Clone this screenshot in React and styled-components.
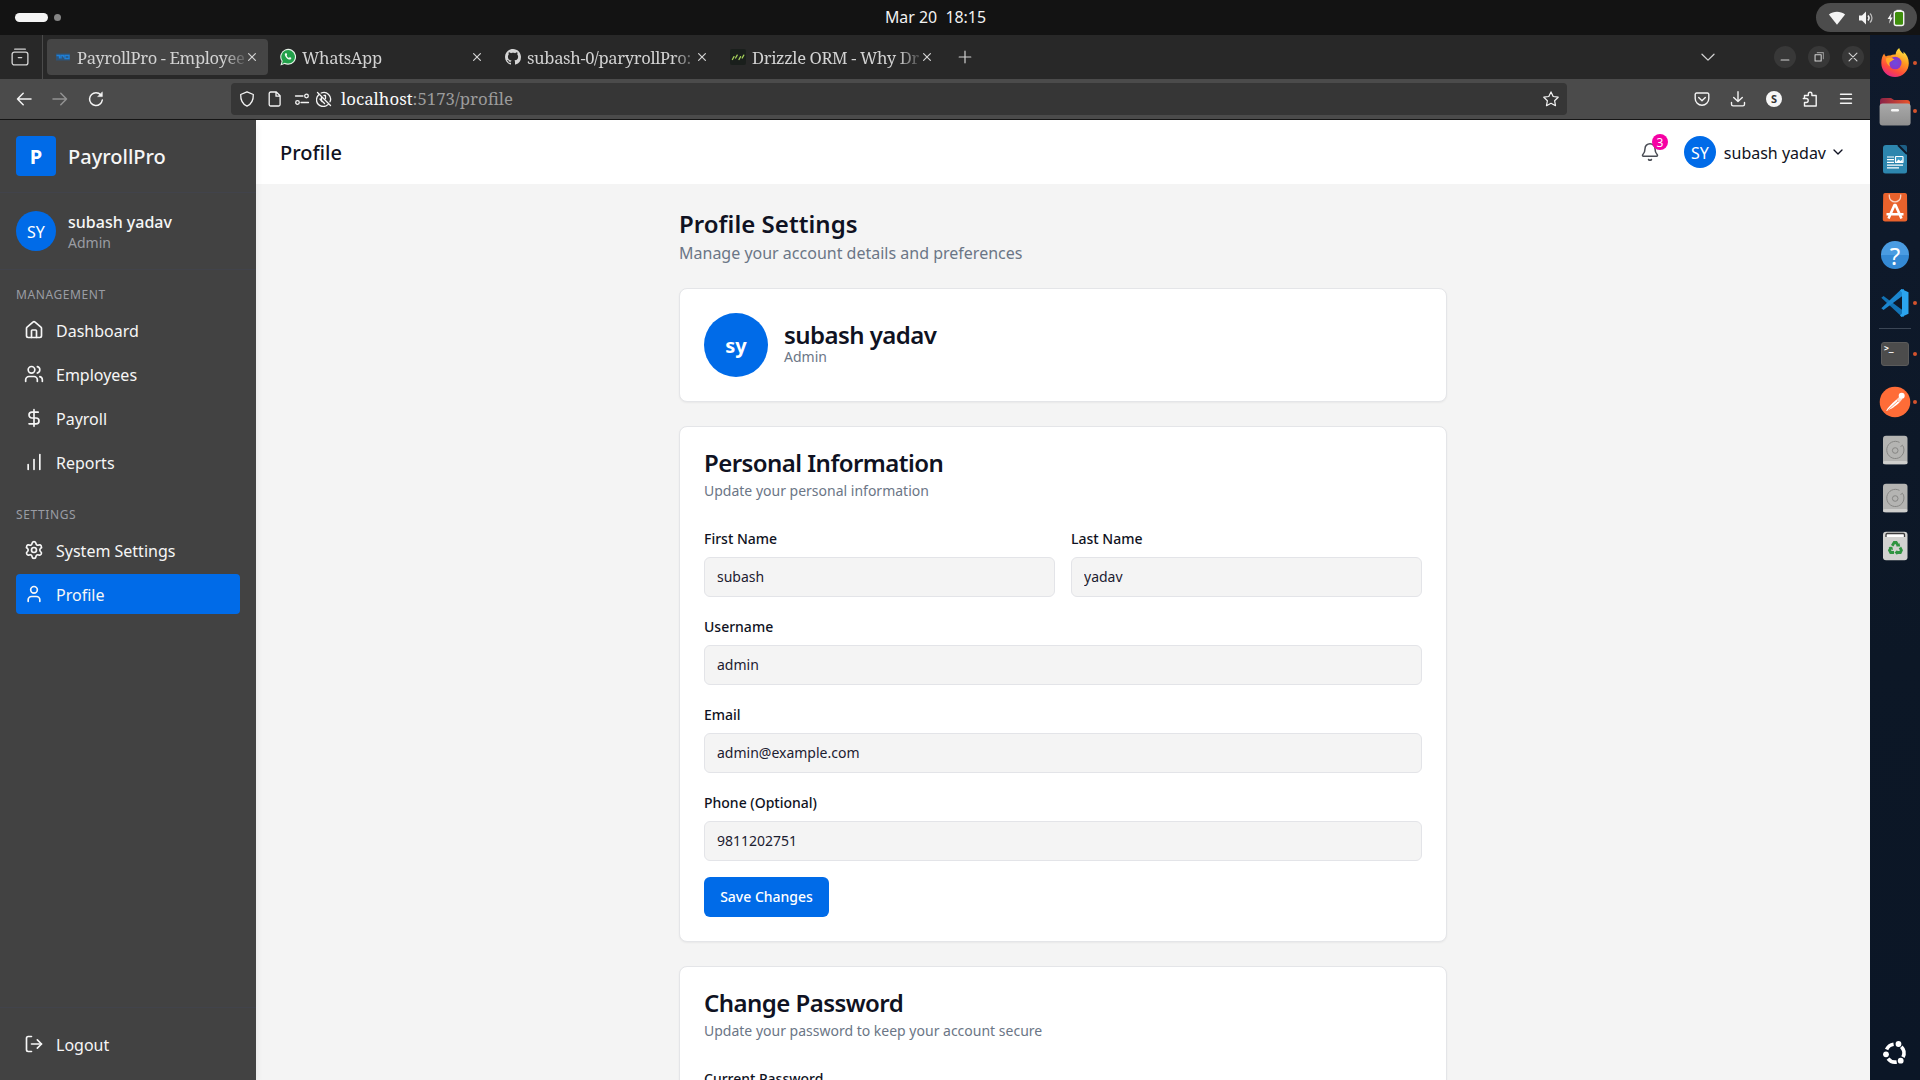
import React from "react";
import styled, { createGlobalStyle, css } from "styled-components";
import {
  House, Users, DollarSign, ChartNoAxesColumnIncreasing, Settings, User, LogOut, Bell, ChevronDown,
} from "lucide-react";

const BLUE = "#006be8";
const INK = "#0f1222";
const MUTED = "#6b7686";

const GlobalStyle = createGlobalStyle`
  *, *::before, *::after { box-sizing: border-box; }
  body { margin: 0; background: #0d1829; }
  h1, h2, p { margin: 0; }
  svg { display: block; flex: none; }
  button { font: inherit; border: 0; padding: 0; background: none; color: inherit; }
`;

const Desktop = styled.div`
  width: 1920px;
  height: 1080px;
  overflow: hidden;
  display: flex;
  flex-direction: column;
  font-family: "Noto Sans", sans-serif;
  font-size: 16px;
  line-height: 24px;
  color: ${INK};
`;

/* ---------- system bar ---------- */
const SystemBar = styled.header`
  height: 35px;
  flex: none;
  background: #131313;
  color: #f2f2f2;
  display: grid;
  grid-template-columns: 1fr auto 1fr;
  align-items: center;
  padding: 0 3px 0 15px;
`;
const Workspaces = styled.div`
  display: flex;
  align-items: center;
  gap: 6px;
`;
const WorkspaceMark = styled.span`
  width: ${(p) => (p.$active ? 33 : 7)}px;
  height: ${(p) => (p.$active ? 9 : 7)}px;
  border-radius: 5px;
  background: ${(p) => (p.$active ? "#f4f4f4" : "#858585")};
`;
const Clock = styled.div`
  font-size: 15.9px;
  line-height: 20px;
  white-space: pre;
  margin: 0 61px 1px 0;
`;
const StatusPill = styled.div`
  justify-self: end;
  width: 101px;
  height: 29px;
  border-radius: 15px;
  background: #4c4c4c;
  display: flex;
  align-items: center;
  justify-content: space-between;
  padding: 0 12px;
`;

/* ---------- browser ---------- */
const Workspace = styled.div`
  flex: 1;
  min-height: 0;
  display: flex;
`;
const Browser = styled.div`
  flex: 1;
  min-width: 0;
  display: flex;
  flex-direction: column;
`;
const chromeFont = css`
  font-family: "Noto Serif", "DejaVu Serif Condensed", "DejaVu Serif", serif;
  font-stretch: condensed;
`;
const TabBar = styled.div`
  height: 44px;
  flex: none;
  background: #282828;
  color: #d2d2d2;
  display: flex;
  align-items: center;
  padding-right: 6px;
`;
const TabOverview = styled.div`
  width: 43px;
  height: 100%;
  border-right: 1px solid #4b4b4b;
  display: flex;
  align-items: center;
  justify-content: center;
  padding-right: 2px;
`;
const TabList = styled.div`
  display: flex;
  gap: 4px;
  padding: 0 4px;
`;
const TabItem = styled.div`
  width: 221px;
  height: 36px;
  border-radius: 4px;
  background: ${(p) => (p.$active ? "#454545" : "transparent")};
  display: flex;
  align-items: center;
  padding: 0 8px;
`;
const TabTitle = styled.span`
  ${chromeFont}
  flex: 1;
  min-width: 0;
  margin-left: 6px;
  font-size: 16.6px;
  line-height: 24px;
  letter-spacing: -0.36px;
  padding-top: 1px;
  white-space: nowrap;
  overflow: hidden;
  mask-image: linear-gradient(to right, #000 calc(100% - 20px), rgba(0, 0, 0, 0.2) 100%);
`;
const IconSlot = styled.span`
  width: ${(p) => p.$w || 36}px;
  height: ${(p) => p.$h || 32}px;
  flex: none;
  display: flex;
  align-items: center;
  justify-content: center;
  opacity: ${(p) => (p.$dim ? 0.42 : 1)};
`;
const Spacer = styled.div`
  flex: 1;
`;
const WindowButtons = styled.div`
  display: flex;
  gap: 12px;
  margin-left: 48px;
`;
const WindowButton = styled.span`
  width: 22px;
  height: 22px;
  border-radius: 50%;
  background: #383838;
  display: flex;
  align-items: center;
  justify-content: center;
`;
const Toolbar = styled.div`
  height: 41px;
  flex: none;
  background: #4b4b4b;
  border-bottom: 1px solid #161616;
  color: #f4f4f4;
  display: flex;
  align-items: center;
  padding: 0 6px;
`;
const UrlBar = styled.div`
  width: 1336px;
  height: 32px;
  margin-left: 117px;
  border-radius: 4px;
  background: #363636;
  display: flex;
  align-items: center;
  padding: 0 2px;
`;
const UrlText = styled.span`
  ${chromeFont}
  font-size: 16.8px;
  line-height: 24px;
  margin-left: 8px;
  padding-bottom: 1px;
  color: #9b9b9b;
`;
const Host = styled.span`
  color: #fafafa;
`;
const AccountBadge = styled.span`
  width: 16px;
  height: 16px;
  border-radius: 50%;
  background: #f6f6f6;
  color: #333;
  font: 700 11px/16px "Noto Sans", sans-serif;
  text-align: center;
`;

/* ---------- web page ---------- */
const Page = styled.div`
  flex: 1;
  min-height: 0;
  display: flex;
  background: #f4f4f4;
`;
const Sidebar = styled.aside`
  width: 256px;
  flex: none;
  background: #424242;
  color: #f6f6f6;
  display: flex;
  flex-direction: column;
  position: relative;
  z-index: 1;
  box-shadow: 0 4px 8px -1px rgba(0, 0, 0, 0.1);
`;
const SideBlock = styled.div`
  display: flex;
  align-items: center;
  gap: 12px;
  padding: 16px;
  ${(p) => (p.$edge === "top" ? "border-top" : "border-bottom")}: 1px solid #41434b;
`;
const LogoBox = styled.div`
  width: 40px;
  height: 40px;
  border-radius: 4px;
  background: ${BLUE};
  color: #fff;
  font-size: 20px;
  font-weight: 700;
  line-height: 42px;
  text-align: center;
`;
const Brand = styled.span`
  font-size: 20px;
  font-weight: 500;
  line-height: 28px;
  margin-top: 2px;
`;
const Avatar = styled.div`
  width: ${(p) => p.$size}px;
  height: ${(p) => p.$size}px;
  flex: none;
  border-radius: 50%;
  background: ${BLUE};
  color: #fff;
  font-size: ${(p) => p.$font || 16}px;
  font-weight: ${(p) => p.$weight || 400};
  display: flex;
  align-items: center;
  justify-content: center;
  padding-top: 2px;
`;
const SideName = styled.div`
  font-weight: 500;
  line-height: 24px;
  padding-top: 1px;
  margin-bottom: -1px;
`;
const SideRole = styled.div`
  font-size: 14px;
  line-height: 20px;
  color: #9a9da4;
`;
const SideNav = styled.nav`
  flex: 1;
  padding: 16px;
  display: flex;
  flex-direction: column;
  gap: 24px;
`;
const NavGroup = styled.div`
  display: flex;
  flex-direction: column;
  gap: 4px;
`;
const NavLabel = styled.div`
  font-size: 12px;
  line-height: 16px;
  letter-spacing: 0.6px;
  color: #9a9da4;
  text-transform: uppercase;
  padding-top: 1px;
  margin-bottom: 3px;
`;
const NavItem = styled.a`
  height: 40px;
  border-radius: 4px;
  padding: 0 8px;
  display: flex;
  align-items: center;
  gap: 12px;
  background: ${(p) => (p.$active ? BLUE : "transparent")};
`;
const NavText = styled.span`
  line-height: 24px;
  padding-top: 1px;
`;
const Main = styled.div`
  flex: 1;
  min-width: 0;
  display: flex;
  flex-direction: column;
`;
const PageHeader = styled.header`
  height: 64px;
  flex: none;
  background: #fff;
  display: flex;
  align-items: center;
  justify-content: space-between;
  padding: 0 24px;
`;
const HeaderTitle = styled.h1`
  font-size: 20px;
  font-weight: 500;
  line-height: 28px;
  padding-top: 2px;
`;
const HeaderTools = styled.div`
  display: flex;
  align-items: center;
`;
const BellButton = styled.button`
  position: relative;
  width: 20px;
  height: 20px;
  margin-right: 24px;
  color: #4a4d55;
`;
const BellCount = styled.span`
  position: absolute;
  top: -8px;
  right: -8px;
  width: 16px;
  height: 16px;
  border-radius: 50%;
  background: #f600a4;
  color: #fff;
  font-size: 12px;
  line-height: 17px;
  text-align: center;
`;
const HeaderUser = styled.span`
  margin: 2px 4px 0 8px;
`;
const Scroll = styled.main`
  flex: 1;
  min-height: 0;
  overflow: hidden;
  padding: 24px;
`;
const Column = styled.div`
  width: 768px;
  margin: 0 auto;
  display: flex;
  flex-direction: column;
  gap: 24px;
`;
const PageTitle = styled.h1`
  font-size: 24px;
  font-weight: 600;
  line-height: 32px;
  letter-spacing: 0.04px;
`;
const PageLead = styled.p`
  color: ${MUTED};
  line-height: 24px;
  padding-top: 1px;
  margin-bottom: -1px;
`;
const Card = styled.section`
  background: #fff;
  border: 1px solid #e4e5e8;
  border-radius: 8px;
  box-shadow: 0 1px 2px rgba(0, 0, 0, 0.05);
  padding: 24px;
  display: flex;
  flex-direction: ${(p) => (p.$row ? "row" : "column")};
  align-items: ${(p) => (p.$row ? "center" : "stretch")};
  gap: ${(p) => (p.$row ? 16 : 24)}px;
`;
const CardHead = styled.div`
  display: flex;
  flex-direction: column;
  gap: 6px;
`;
const CardTitle = styled.h2`
  font-size: 24px;
  font-weight: 600;
  line-height: 24px;
  letter-spacing: -0.55px;
`;
const CardNote = styled.p`
  font-size: 14px;
  line-height: 20px;
  color: ${MUTED};
`;
const Form = styled.form`
  display: flex;
  flex-direction: column;
  gap: 16px;
`;
const FieldRow = styled.div`
  display: grid;
  grid-template-columns: 1fr 1fr;
  gap: 16px;
`;
const FieldBox = styled.div`
  display: flex;
  flex-direction: column;
  gap: 8px;
`;
const FieldLabel = styled.label`
  font-size: 14px;
  font-weight: 500;
  line-height: 24px;
  height: 24px;
  padding-top: 2px;
`;
const FieldInput = styled.input`
  height: 40px;
  width: 100%;
  border: 1px solid #e3e4e8;
  border-radius: 6px;
  background: #f4f4f4;
  padding: 0 12px 2px;
  font: 400 14px/20px "Noto Sans", sans-serif;
  color: #1c2030;
  outline: none;
`;
const SaveButton = styled.button`
  align-self: flex-start;
  height: 40px;
  width: 125px;
  border-radius: 6px;
  background: ${BLUE};
  color: #fff;
  font-size: 14px;
  font-weight: 500;
  line-height: 20px;
  cursor: pointer;
`;

/* ---------- dock ---------- */
const Dock = styled.aside`
  width: 50px;
  flex: none;
  background: linear-gradient(#0f1a2c, #0c1726 60%, #0b1626);
  display: flex;
  flex-direction: column;
  padding: 4px 0 3px;
`;
const DockItem = styled.div`
  height: 48px;
  flex: none;
  display: flex;
  align-items: center;
  padding-left: 8px;
  gap: 1px;
`;
const RunningDot = styled.span`
  width: 4px;
  height: 4px;
  border-radius: 50%;
  background: #d4532d;
`;
const DockDivider = styled.hr`
  width: 32px;
  height: 1px;
  margin: 1px auto 1px 9px;
  border: 0;
  background: #3b4656;
`;

/* ---------- chrome icons ---------- */
const Line = ({ size = 16, w = 1.3, children, ...rest }) => (
  <svg width={size} height={size} viewBox="0 0 16 16" fill="none" stroke="currentColor" strokeWidth={w}
    strokeLinecap="round" strokeLinejoin="round" {...rest}>{children}</svg>
);
const CloseIcon = () => (
  <IconSlot $w={16} $h={16}><Line size={16} w={1.2}><path d="M4.6 4.6l6.8 6.8M11.4 4.6l-6.8 6.8" /></Line></IconSlot>
);

const WifiIcon = () => (
  <svg width="18" height="16" viewBox="0 0 18 16"><path d="M9 14.8L.9 4.6C3.2 2.7 6 1.8 9 1.8s5.8.9 8.1 2.8z" fill="#f4f4f4" /></svg>
);
const VolumeIcon = () => (
  <svg width="17" height="16" viewBox="0 0 17 16">
    <path d="M1 5.5h3L8 1.6v12.8L4 10.5H1z" fill="#f4f4f4" />
    <path d="M10 5.6a3.6 3.6 0 010 4.8" stroke="#f4f4f4" strokeWidth="1.5" fill="none" />
    <path d="M12 3.4c2.6 2.4 2.6 6.8 0 9.2" stroke="#bdbdbd" strokeWidth="1.3" fill="none" />
  </svg>
);
const BatteryIcon = () => (
  <svg width="18" height="18" viewBox="0 0 18 18">
    <path d="M4.6 3.8L.6 9.9h2.3l-.8 4.8 3.6-6.1H3.6z" fill="#f4f4f4" />
    <rect x="9.5" y=".8" width="5" height="2" fill="#f4f4f4" />
    <rect x="7.3" y="2.3" width="9.4" height="14.2" rx="2" fill="#3f8f0c" stroke="#f4f4f4" strokeWidth="1.4" />
  </svg>
);
const SiteMark = () => (
  <svg width="16" height="16" viewBox="0 0 16 16">
    <rect x="1" y="4.5" width="14" height="7" fill="#1c5fa0" opacity=".55" />
    <path d="M1.5 6.5h3v3M6 9.500V6.500h2.500v2M10 6.500h4v3h-4z" stroke="#1f7fd6" strokeWidth="1.300" fill="none" />
  </svg>
);
const WhatsAppMark = () => (
  <svg width="16" height="18" viewBox="0 0 16 18">
    <path d="M.4 17.400l1.200-4.200A7.900 7.900 0 118 16.700c-1.300 0-2.500-.3-3.600-.8z" fill="#e6f3e8" />
    <path d="M1.900 15.900l.8-3A6.800 6.800 0 118 15.600c-1.200 0-2.300-.3-3.200-.8z" fill="#22a04a" />
    <path d="M5.500 5.300c-.9.700-1.200 2.100.9 4.400 2.200 2.300 3.900 2.200 4.600 1.300.6-.8.300-1-.3-1.400-.9-.5-1.200-.5-1.700.2-.3.400-2.600-1.800-2.300-2.400.5-.6.500-.8.200-1.500-.3-.7-.8-1.100-1.400-.6z" fill="#f4fbf5" />
  </svg>
);
const GithubMark = () => (
  <svg width="16" height="16" viewBox="0 0 16 16" fill="#d6d6d6">
    <path d="M8 0C3.580 0 0 3.580 0 8c0 3.540 2.290 6.530 5.470 7.590.4.070.550-.170.550-.380 0-.190-.010-.820-.010-1.490-2.010.370-2.530-.490-2.690-.940-.090-.230-.480-.940-.820-1.130-.280-.150-.680-.520-.010-.530.630-.010 1.080.580 1.230.820.720 1.210 1.870.870 2.330.660.070-.520.280-.870.510-1.070-1.780-.200-3.640-.890-3.640-3.950 0-.870.310-1.590.820-2.150-.080-.200-.360-1.020.080-2.120 0 0 .670-.210 2.200.820.640-.180 1.320-.270 2-.270s1.360.090 2 .270c1.530-1.040 2.200-.820 2.200-.820.440 1.100.160 1.920.080 2.120.510.560.820 1.270.820 2.150 0 3.070-1.870 3.750-3.650 3.950.290.250.540.730.540 1.480 0 1.070-.010 1.930-.010 2.200 0 .210.150.460.550.380A8.010 8.010 0 0016 8c0-4.420-3.580-8-8-8z" />
  </svg>
);
const DrizzleMark = () => (
  <svg width="16" height="16" viewBox="0 0 16 16">
    <rect width="16" height="16" rx="2" fill="#1a1f1c" />
    <path d="M2.400 10.500l1.600-2.900M5.600 9l1.600-2.900M9 10.500l1.600-2.900M12.200 9l1.600-2.900" stroke="#a5cf5a" strokeWidth="1.300" strokeLinecap="round" />
  </svg>
);

/* ---------- dock icons ---------- */
const DockSvg = ({ children }) => <svg width="34" height="34" viewBox="0 0 34 34">{children}</svg>;

const FirefoxIcon = () => (
  <DockSvg>
    <defs>
      <linearGradient id="ffBody" x1=".8" y1="0" x2=".3" y2="1">
        <stop offset="0" stopColor="#fff04a" /><stop offset=".4" stopColor="#ff9a1f" />
        <stop offset=".75" stopColor="#ff4a3c" /><stop offset="1" stopColor="#e3248c" />
      </linearGradient>
      <radialGradient id="ffGlobe"><stop offset="0" stopColor="#6a4be0" /><stop offset="1" stopColor="#8a35c8" /></radialGradient>
    </defs>
    <path d="M3.300 17c0-4 1-7.500 3-9.500.2 1.300.8 2.300 1.600 2.900 1.400-.9 3-1.200 4.500-.8 1.500-1 3.600-1.300 5.200-1 .2-3 1.600-5.200 3.600-6.600.6 2.600 2.400 4.200 4.200 6 .2-.8.200-1.600 0-2.400 3.600 3 5.400 7 5.400 11.600C30.800 25 24.600 31 17 31S3.300 25 3.300 17z" fill="url(#ffBody)" />
    <circle cx="17.200" cy="17" r="6.300" fill="url(#ffGlobe)" />
    <path d="M8 12.500c3-1.800 6-1 8.500 1.200-2.200.2-3 1.600-4.600 2.400-.8 1.300-.6 3 .4 4.500-2.800-1.600-4.600-4.600-4.300-8.100z" fill="#ffa928" />
  </DockSvg>
);
const FilesIcon = () => (
  <DockSvg>
    <defs>
      <linearGradient id="fTab"><stop offset="0" stopColor="#8a2248" /><stop offset="1" stopColor="#e9542a" /></linearGradient>
      <linearGradient id="fBody" x2="0" y2="1"><stop offset="0" stopColor="#a9a9a9" /><stop offset="1" stopColor="#8f8f8f" /></linearGradient>
    </defs>
    <path d="M2 7a3 3 0 013-3h8l3 2h13a3 3 0 013 3v8H2z" fill="url(#fTab)" />
    <rect x="1.600" y="9.500" width="31" height="22" rx="3" fill="url(#fBody)" />
    <rect x="13" y="15" width="8" height="2.400" rx="1.200" fill="#f6f6f6" />
  </DockSvg>
);
const WriterIcon = () => (
  <DockSvg>
    <path d="M8 3h12.500L29 12v17a2.500 2.500 0 01-2.500 2.500H7.500A2.500 2.500 0 015 29V6a3 3 0 013-3z" fill="#2d86ae" />
    <path d="M20 3l9 9V5a2 2 0 00-2-2z" fill="#1d5f86" />
    <path d="M20 3l9 9" stroke="#0d1829" strokeWidth="2" />
    <path d="M9 15h7M9 17.700h7M9 20.400h7M9 23.100h16M9 25.800h12" stroke="#fff" strokeWidth="1.200" />
    <rect x="17.500" y="14.500" width="7.500" height="6" rx=".6" fill="#3c9ac4" stroke="#fff" strokeWidth="1.200" />
    <path d="M18 20l2.500-2.500 2 1.500 2-1.500V20z" fill="#fff" />
  </DockSvg>
);
const StoreIcon = () => (
  <DockSvg>
    <path d="M7 3h20a2 2 0 012 1.800l.3 24A2.500 2.500 0 0127 31.500H7.200a2.500 2.500 0 01-2.400-2.700l.4-24A2 2 0 017 3z" fill="#e9622c" />
    <path d="M11.300 4.500v1.700a5.700 5.700 0 0011.400 0V4.500" stroke="#f9d4c4" strokeWidth="1.300" fill="none" />
    <path d="M10.500 28.500L16.500 15h1l6 13.500M8.500 24.200h17" stroke="#fff" strokeWidth="2.600" fill="none" strokeLinejoin="round" />
  </DockSvg>
);
const QuestionDisc = styled.span`
  width: 28px;
  height: 28px;
  margin: 0 3px;
  border-radius: 50%;
  background: linear-gradient(#4a9ce2 50%, #3489d4 50%);
  color: #fff;
  font: 400 24px/29px "Noto Sans", sans-serif;
  text-align: center;
`;
const CodeIcon = () => (
  <DockSvg>
    <path d="M3.300 11.800l2.200-1.700L26 25.200V31l-3-1z" fill="#1272b4" />
    <path d="M3.300 22.200l2.200 1.700L26 8.800V3l-3.500 1z" fill="#1b86cf" />
    <path d="M23.500 3l7 3.300v21.400l-7 3.300-1.500-1.400 2-2.100V6.500L22 4.400z" fill="#2ba4ee" />
  </DockSvg>
);
const TerminalBox = styled.span`
  width: 28px;
  height: 24px;
  margin: 0 3px;
  border-radius: 3px;
  background: #4c4c4c;
  border: 1px solid #5b5b5b;
  color: #fff;
  font: 700 8px/9px "DejaVu Sans Mono", monospace;
  padding: 1px 0 0 2px;
`;
const PostmanIcon = () => (
  <DockSvg>
    <circle cx="17" cy="17" r="15.300" fill="#ff6c37" />
    <path d="M8 26c2-3.500 5-7 10.500-11.500l3 3C17 21.500 14 23.800 8 26z" fill="#fff" />
    <path d="M18.500 14.500l3.300-3.200 2.700 2.600-3 3.500z" fill="#ffd9cc" />
    <circle cx="23.700" cy="10.800" r="3" fill="#fff" />
    <path d="M10 25l10-9" stroke="#ff6c37" strokeWidth=".7" />
  </DockSvg>
);
const DiskIcon = () => (
  <DockSvg>
    <rect x="5" y="2.800" width="24.500" height="28.500" rx="3" fill="#b4b4b2" />
    <rect x="5" y="28" width="24.500" height="3.300" rx="1.600" fill="#cfcfcd" />
    <path d="M25 13a8.600 8.600 0 11-3.500-3.600" fill="none" stroke="#868684" strokeWidth="1" />
    <path d="M22.500 13.500l2.500-1.500" stroke="#868684" strokeWidth="1" />
    <circle cx="17.200" cy="17.500" r="2.800" fill="none" stroke="#868684" strokeWidth="1" />
  </DockSvg>
);
const TrashIcon = () => (
  <DockSvg>
    <rect x="5" y="2.800" width="24.500" height="28.500" rx="3" fill="#d2d2d0" />
    <path d="M8 8V5.800A1.300 1.300 0 019.300 4.500h16A1.300 1.300 0 0126.500 5.800V8" stroke="#3c3c3c" strokeWidth="1.300" fill="#fff" />
    <g fill="none" stroke="#2f9440" strokeWidth="2.800">
      <path d="M14.200 16.800l2-3.300h2l1.800 3" />
      <path d="M22 18.500l1.400 2.700-1.100 2.300h-3.600" />
      <path d="M16 23.500h-3.300l-1.200-2.300 1.700-2.900" />
    </g>
    <path d="M18.300 17.600l4-.2-1-3.400zM19.200 21l-2.700 2.600 2.700 2.500zM10.500 18.300l3.800-.6.700 3.600z" fill="#2f9440" />
  </DockSvg>
);
const UbuntuIcon = () => (
  <DockSvg>
    <g fill="none" stroke="#fff" strokeWidth="3.600">
      <path d="M8.600 13.500a9 9 0 017-5.300" />
      <path d="M23.300 10.800a9 9 0 011.700 10.300" />
      <path d="M18.700 26a9 9 0 01-8.700-3.300" />
    </g>
    <circle cx="20.500" cy="8" r="2.900" fill="#fff" />
    <circle cx="8" cy="18.300" r="2.900" fill="#fff" />
    <circle cx="22.700" cy="24.700" r="2.900" fill="#fff" />
  </DockSvg>
);

/* ---------- data ---------- */
const tabs = [
  { title: "PayrollPro - Employee", Icon: SiteMark, active: true },
  { title: "WhatsApp", Icon: WhatsAppMark },
  { title: "subash-0/paryrollPro:", Icon: GithubMark },
  { title: "Drizzle ORM - Why Dr", Icon: DrizzleMark },
];
const navGroups = [
  { label: "Management", items: [["Dashboard", House], ["Employees", Users], ["Payroll", DollarSign], ["Reports", ChartNoAxesColumnIncreasing]] },
  { label: "Settings", items: [["System Settings", Settings], ["Profile", User]] },
];
const dockApps = [
  { id: "firefox", icon: <FirefoxIcon />, running: true },
  { id: "files", icon: <FilesIcon />, running: true },
  { id: "writer", icon: <WriterIcon /> },
  { id: "store", icon: <StoreIcon /> },
  { id: "help", icon: <QuestionDisc>?</QuestionDisc> },
  { id: "code", icon: <CodeIcon />, running: true },
];
const dockExtras = [
  { id: "terminal", icon: <TerminalBox>&gt;_</TerminalBox>, running: true },
  { id: "postman", icon: <PostmanIcon />, running: true },
  { id: "disk-a", icon: <DiskIcon /> },
  { id: "disk-b", icon: <DiskIcon /> },
  { id: "trash", icon: <TrashIcon /> },
];

const Field = ({ label, value }) => (
  <FieldBox>
    <FieldLabel>{label}</FieldLabel>
    <FieldInput defaultValue={value} />
  </FieldBox>
);
const DockApp = ({ app }) => (
  <DockItem>{app.icon}{app.running && <RunningDot />}</DockItem>
);

export default function App() {
  return (
    <Desktop>
      <GlobalStyle />
      <SystemBar>
        <Workspaces><WorkspaceMark $active /><WorkspaceMark /></Workspaces>
        <Clock>{"Mar 20  18:15"}</Clock>
        <StatusPill><WifiIcon /><VolumeIcon /><BatteryIcon /></StatusPill>
      </SystemBar>

      <Workspace>
        <Browser>
          <TabBar>
            <TabOverview>
              <Line size={18} w={1.2}>
                <path d="M3.300 1h9.400" /><rect x="1" y="3.600" width="14" height="11.400" rx="2" /><path d="M6.500 8.500h3" />
              </Line>
            </TabOverview>
            <TabList>
              {tabs.map(({ title, Icon, active }) => (
                <TabItem key={title} $active={active}>
                  <Icon /><TabTitle>{title}</TabTitle><CloseIcon />
                </TabItem>
              ))}
            </TabList>
            <IconSlot><Line w={1.2}><path d="M8 2.200v11.600M2.200 8h11.600" /></Line></IconSlot>
            <Spacer />
            <IconSlot $w={36}><Line w={1.300}><path d="M2 5.300l6 5.800 6-5.800" /></Line></IconSlot>
            <WindowButtons>
              <WindowButton><Line size={14} w={1.200}><path d="M3.500 11.500h9" /></Line></WindowButton>
              <WindowButton><Line size={14} w={1.200}><rect x="3.500" y="5.500" width="7" height="7" /><path d="M6 3h7v7" opacity=".6" /></Line></WindowButton>
              <WindowButton><Line size={14} w={1.300}><path d="M3.500 3.500l9 9M12.500 3.500l-9 9" /></Line></WindowButton>
            </WindowButtons>
          </TabBar>

          <Toolbar>
            <IconSlot><Line w={1.500}><path d="M15 8H1.500M7.200 2.300L1.500 8l5.700 5.700" /></Line></IconSlot>
            <IconSlot $dim><Line w={1.500}><path d="M1 8h13.500M8.800 2.300L14.500 8l-5.700 5.700" /></Line></IconSlot>
            <IconSlot><Line w={1.500}><path d="M14.300 9A6.400 6.400 0 118 1.700c2 0 3.600.8 4.900 2.200" /><path d="M14.300 1.300v4.300H10z" fill="currentColor" strokeWidth=".6" /></Line></IconSlot>
            <UrlBar>
              <IconSlot $w={28}><Line w={1.300}><path d="M8 .8l6.300 2.700c.2 5.300-1.600 9.500-6.300 11.700C3.300 13 1.500 8.800 1.700 3.500z" /></Line></IconSlot>
              <IconSlot $w={28}><Line w={1.300}><path d="M3.700 1h5.600l3.800 3.800v8.700a1.500 1.500 0 01-1.500 1.500H3.700a1.500 1.500 0 01-1.500-1.500v-11A1.500 1.500 0 013.700 1zM9 1.200v4h4" /></Line></IconSlot>
              <IconSlot $w={26}><Line w={1.300}><path d="M1.500 5h7.500M7 11.500h7.500" /><circle cx="12.500" cy="5" r="1.800" /><circle cx="3.500" cy="11.500" r="1.800" /></Line></IconSlot>
              <IconSlot $w={18}><Line w={1.300}><path d="M1.500 1.500l13 13M5.200 2A6.700 6.700 0 0114 10.800M2.500 4a6.700 6.700 0 009.400 9.600M5.500 5.500v4l3 3M8 4.500h1.500v3M6 10.500l-2-2.500" /></Line></IconSlot>
              <UrlText><Host>localhost</Host>:5173/profile</UrlText>
              <Spacer />
              <IconSlot $w={28}><Line w={1.200}><path d="M8 .9l2.200 4.600 5 .7-3.600 3.500.9 5L8 12.300l-4.500 2.400.9-5L.8 6.200l5-.7z" /></Line></IconSlot>
            </UrlBar>
            <Spacer />
            <IconSlot><Line w={1.400}><path d="M2.500 2h11a1.300 1.300 0 011.300 1.300V7.500a6.800 6.800 0 01-13.600 0V3.300A1.300 1.300 0 012.500 2zM4.700 6.500L8 9.700l3.300-3.200" /></Line></IconSlot>
            <IconSlot><Line w={1.400}><path d="M8 .8v9.700M3.700 6.500L8 10.600l4.300-4.100M1.500 11.500v1.800a1.600 1.600 0 001.600 1.600h9.800a1.600 1.600 0 001.600-1.600v-1.800" /></Line></IconSlot>
            <IconSlot><AccountBadge>S</AccountBadge></IconSlot>
            <IconSlot><Line w={1.400}><path d="M2.500 7V4.500h3.800V3a1.800 1.800 0 013.600 0v1.500h4.300V15H2.500v-3.500h1.700a2 2 0 000-4H1.300" /></Line></IconSlot>
            <IconSlot><Line w={1.400}><path d="M2.500 3.300h11M2.500 7.800h11M2.500 12.300h11" /></Line></IconSlot>
          </Toolbar>

          <Page>
            <Sidebar>
              <SideBlock><LogoBox>P</LogoBox><Brand>PayrollPro</Brand></SideBlock>
              <SideBlock>
                <Avatar $size={40}>SY</Avatar>
                <div><SideName>subash yadav</SideName><SideRole>Admin</SideRole></div>
              </SideBlock>
              <SideNav>
                {navGroups.map((group) => (
                  <NavGroup key={group.label}>
                    <NavLabel>{group.label}</NavLabel>
                    {group.items.map(([text, Icon]) => (
                      <NavItem key={text} $active={text === "Profile"}>
                        <Icon size={20} /><NavText>{text}</NavText>
                      </NavItem>
                    ))}
                  </NavGroup>
                ))}
              </SideNav>
              <SideBlock $edge="top">
                <NavItem><LogOut size={20} /><NavText>Logout</NavText></NavItem>
              </SideBlock>
            </Sidebar>

            <Main>
              <PageHeader>
                <HeaderTitle>Profile</HeaderTitle>
                <HeaderTools>
                  <BellButton><Bell size={20} strokeWidth={1.800} /><BellCount>3</BellCount></BellButton>
                  <Avatar $size={32}>SY</Avatar>
                  <HeaderUser>subash yadav</HeaderUser>
                  <ChevronDown size={16} />
                </HeaderTools>
              </PageHeader>
              <Scroll>
                <Column>
                  <div>
                    <PageTitle>Profile Settings</PageTitle>
                    <PageLead>Manage your account details and preferences</PageLead>
                  </div>
                  <Card $row>
                    <Avatar $size={64} $font={20} $weight={700}>sy</Avatar>
                    <div><CardTitle>subash yadav</CardTitle><CardNote>Admin</CardNote></div>
                  </Card>
                  <Card>
                    <CardHead>
                      <CardTitle>Personal Information</CardTitle>
                      <CardNote>Update your personal information</CardNote>
                    </CardHead>
                    <Form>
                      <FieldRow>
                        <Field label="First Name" value="subash" />
                        <Field label="Last Name" value="yadav" />
                      </FieldRow>
                      <Field label="Username" value="admin" />
                      <Field label="Email" value="admin@example.com" />
                      <Field label="Phone (Optional)" value="9811202751" />
                      <SaveButton type="button">Save Changes</SaveButton>
                    </Form>
                  </Card>
                  <Card>
                    <CardHead>
                      <CardTitle>Change Password</CardTitle>
                      <CardNote>Update your password to keep your account secure</CardNote>
                    </CardHead>
                    <Form><Field label="Current Password" value="" /></Form>
                  </Card>
                </Column>
              </Scroll>
            </Main>
          </Page>
        </Browser>

        <Dock>
          {dockApps.map((app) => <DockApp key={app.id} app={app} />)}
          <DockDivider />
          {dockExtras.map((app) => <DockApp key={app.id} app={app} />)}
          <Spacer />
          <DockItem><UbuntuIcon /></DockItem>
        </Dock>
      </Workspace>
    </Desktop>
  );
}
